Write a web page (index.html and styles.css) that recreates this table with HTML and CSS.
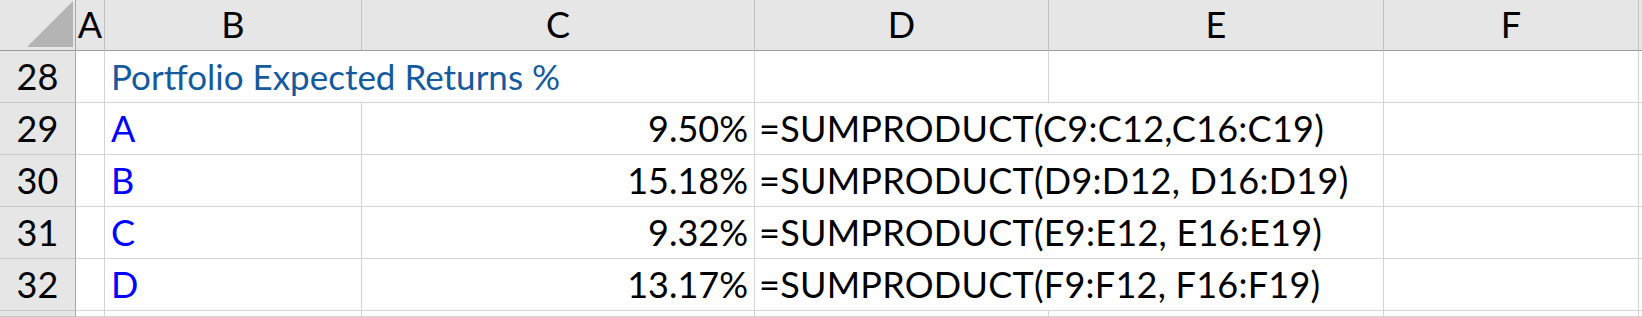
FILE: index.html
```html
<!DOCTYPE html>
<html>
<head>
<meta charset="utf-8">
<link rel="stylesheet" href="styles.css">
</head>
<body>
<div class="sheet">
  <div class="cell corner"><svg class="tri" width="46" height="46" viewBox="0 0 46 46"><polygon points="46,0 46,46 0,46" fill="#b4b4b4"/></svg></div>
  <div class="cell hdr">A</div>
  <div class="cell hdr">B</div>
  <div class="cell hdr">C</div>
  <div class="cell hdr">D</div>
  <div class="cell hdr">E</div>
  <div class="cell hdr">F</div>
  <div class="cell hdr edge"></div>

  <div class="cell rn">28</div>
  <div class="cell"></div>
  <div class="cell span2 title">Portfolio Expected Returns %</div>
  <div class="cell"></div>
  <div class="cell"></div>
  <div class="cell"></div>
  <div class="cell edge"></div>

  <div class="cell rn">29</div>
  <div class="cell"></div>
  <div class="cell lbl">A</div>
  <div class="cell num">9.50%</div>
  <div class="cell span2 formula">=SUMPRODUCT(C9:C12,C16:C19)</div>
  <div class="cell"></div>
  <div class="cell edge"></div>

  <div class="cell rn">30</div>
  <div class="cell"></div>
  <div class="cell lbl">B</div>
  <div class="cell num">15.18%</div>
  <div class="cell span2 formula">=SUMPRODUCT(D9:D12, D16:D19)</div>
  <div class="cell"></div>
  <div class="cell edge"></div>

  <div class="cell rn">31</div>
  <div class="cell"></div>
  <div class="cell lbl">C</div>
  <div class="cell num">9.32%</div>
  <div class="cell span2 formula">=SUMPRODUCT(E9:E12, E16:E19)</div>
  <div class="cell"></div>
  <div class="cell edge"></div>

  <div class="cell rn">32</div>
  <div class="cell"></div>
  <div class="cell lbl">D</div>
  <div class="cell num">13.17%</div>
  <div class="cell span2 formula">=SUMPRODUCT(F9:F12, F16:F19)</div>
  <div class="cell"></div>
  <div class="cell edge"></div>

  <div class="cell rn"></div>
  <div class="cell"></div>
  <div class="cell"></div>
  <div class="cell"></div>
  <div class="cell"></div>
  <div class="cell"></div>
  <div class="cell"></div>
  <div class="cell edge"></div>
</div>
</body>
</html>
```
FILE: styles.css
```css
html, body {
  margin: 0;
  padding: 0;
  background: #ffffff;
  overflow: hidden;
}

.sheet {
  display: grid;
  grid-template-columns: 76px 29px 257px 393px 294px 335px 255px 3px;
  grid-template-rows: 51px repeat(5, 52px) 6px;
  width: 1642px;
  font-family: Lato, "Noto Sans", sans-serif;
  font-size: 36px;
}

.cell {
  box-sizing: border-box;
  border-right: 1px solid #d4d4d4;
  border-bottom: 1px solid #d4d4d4;
  display: flex;
  align-items: flex-end;
  line-height: 44px;
  padding: 0 6px 4px 6px;
  white-space: nowrap;
  overflow: hidden;
  color: #000000;
}

.corner {
  background: #e6e6e6;
  border-right-color: #a8a8a8;
  border-bottom-color: #9b9b9b;
  justify-content: flex-end;
  padding: 0 2px 3px 0;
}

.tri {
  display: block;
}

.hdr {
  background: #e6e6e6;
  border-right-color: #c4c4c4;
  border-bottom-color: #9b9b9b;
  justify-content: center;
  padding-left: 0;
  padding-right: 0;
}

.rn {
  background: #e6e6e6;
  border-right-color: #a8a8a8;
  border-bottom-color: #c8c8c8;
  justify-content: center;
  padding-left: 0;
  padding-right: 0;
}

.edge {
  padding: 0;
  border-right: none;
}

.span2 {
  grid-column: span 2;
}

.num {
  justify-content: flex-end;
}

.lbl {
  color: #0000ff;
}

.title {
  color: #155a9c;
  font-size: 35px;
  line-height: 42px;
  padding-bottom: 5px;
}

.formula {
  padding-left: 4px;
  letter-spacing: 0.25px;
}
```
